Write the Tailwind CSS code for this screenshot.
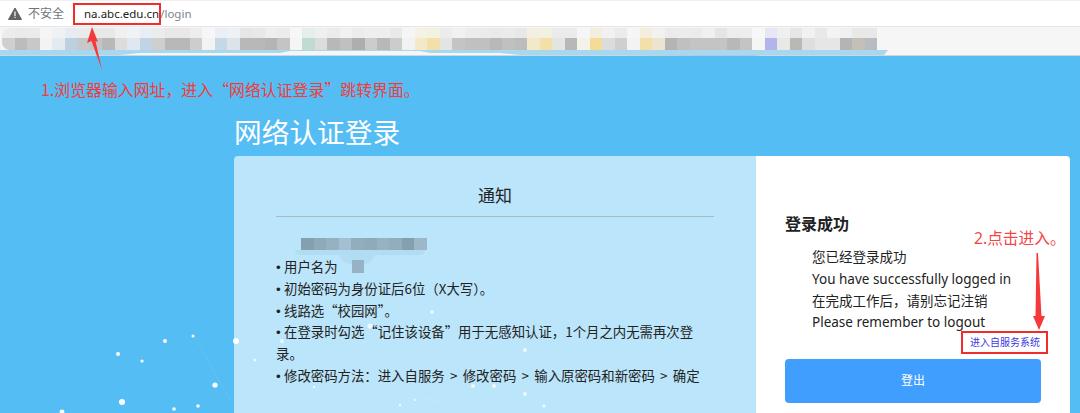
<!DOCTYPE html>
<html lang="zh-CN">
<head>
    <meta charset="UTF-8">
    <title>网络认证登录</title>
    <script src="https://cdn.jsdelivr.net/npm/@tailwindcss/browser@4"></script>
</head>
<body class="bg-[#54bdf3] font-['Noto_Sans','Noto_Sans_CJK_SC',sans-serif]">
<div class="relative w-[1080px] h-[413px] overflow-hidden">

    <!-- Address bar -->
    <div class="h-[27px] bg-white border-t border-b border-t-[#f0f0f0] border-b-[#e6e6e6] flex items-center pl-[8px] text-[12px] text-[#666]">
        <svg class="w-[14px] h-[13px] mr-[6px]" viewBox="0 0 14 13"><path d="M7 1 13.500 12.500H.5Z" fill="#5f6368" stroke="#5f6368" stroke-linejoin="round"/><path d="M6.400 4.500h1.200v4.400H6.400zM6.400 9.800h1.200v1.200H6.400z" fill="#fff"/></svg>
        <span class="w-[56px] text-[#70757a]">不安全</span>
        <span class="text-[11.500px] text-[#222]">na.abc.edu.cn</span><span class="text-[11.500px] text-[#80868b] ml-[1px]">/login</span>
    </div>

    <!-- Pixelated bookmarks bar -->
    <div class="h-[29px] bg-[#f6f6f6] flex flex-col">
        <div class="grid grid-cols-[repeat(70,12.5px)] grid-rows-[9.5px_12.5px] ml-[2px] mt-[1px] h-[22px]">
            <div class="bg-[#ececec] rounded-tl-[8px]"></div><div class="bg-[#eaeaea]"></div><div class="bg-[#ebebeb]"></div><div class="bg-[#f5f5f5]"></div><div class="bg-[#eef2f5]"></div><div class="bg-[#e6ecf2]"></div><div class="bg-[#ebebeb]"></div><div class="bg-[#e8e8e8]"></div><div class="bg-[#e8e8e8]"></div><div class="bg-[#f0f0f0]"></div><div class="bg-[#eff3f6]"></div><div class="bg-[#e8eef3]"></div><div class="bg-[#ececec]"></div><div class="bg-[#e8e8e8]"></div><div class="bg-[#e8e8e8]"></div><div class="bg-[#ededed]"></div><div class="bg-[#f6f6f6]"></div><div class="bg-[#e9eff4]"></div><div class="bg-[#eef1f3]"></div><div class="bg-[#e6e6e6]"></div><div class="bg-[#e8e8e8]"></div><div class="bg-[#eeeeee]"></div><div class="bg-[#ececec]"></div><div class="bg-[#f7f7f7]"></div><div class="bg-[#e4eeea]"></div><div class="bg-[#efefef]"></div><div class="bg-[#ebebeb]"></div><div class="bg-[#f1f1f1]"></div><div class="bg-[#ececec]"></div><div class="bg-[#eeeeee]"></div><div class="bg-[#eeeeee]"></div><div class="bg-[#e9e9e9]"></div><div class="bg-[#f5f5f5]"></div><div class="bg-[#f5f2e4]"></div><div class="bg-[#f4f1e2]"></div><div class="bg-[#ececec]"></div><div class="bg-[#f1f1f1]"></div><div class="bg-[#ebeded]"></div><div class="bg-[#ebebeb]"></div><div class="bg-[#e9e9e9]"></div><div class="bg-[#ebebeb]"></div><div class="bg-[#e8e8e8]"></div><div class="bg-[#f3f0e2]"></div><div class="bg-[#f3f0e2]"></div><div class="bg-[#ebebeb]"></div><div class="bg-[#ebebeb]"></div><div class="bg-[#f6f6f6]"></div><div class="bg-[#f2eddc]"></div><div class="bg-[#f1f1f1]"></div><div class="bg-[#ebebeb]"></div><div class="bg-[#f6f6f6]"></div><div class="bg-[#f2eddc]"></div><div class="bg-[#f1f1ed]"></div><div class="bg-[#ebebeb]"></div><div class="bg-[#ececec]"></div><div class="bg-[#ebebeb]"></div><div class="bg-[#f0f0f0]"></div><div class="bg-[#e5e5e5]"></div><div class="bg-[#ededed]"></div><div class="bg-[#ededed]"></div><div class="bg-[#f7f7f7]"></div><div class="bg-[#e6e6f6]"></div><div class="bg-[#efefef]"></div><div class="bg-[#e6e6e6]"></div><div class="bg-[#f1f1f1]"></div><div class="bg-[#e8e8e8]"></div><div class="bg-[#f3f3f3]"></div><div class="bg-[#f0f0f0]"></div><div class="bg-[#e8e8e6]"></div><div class="bg-[#e8e8e8]"></div>
            <div class="bg-[#cfcfcf] rounded-bl-[8px]"></div><div class="bg-[#bcbcbc]"></div><div class="bg-[#c8c8c8]"></div><div class="bg-[#f3f3f3]"></div><div class="bg-[#e4ebf0]"></div><div class="bg-[#bdd0e0]"></div><div class="bg-[#c8c8c8]"></div><div class="bg-[#c4c4c4]"></div><div class="bg-[#b8b8b8]"></div><div class="bg-[#dcdcdc]"></div><div class="bg-[#e0e8ef]"></div><div class="bg-[#c0d4e6]"></div><div class="bg-[#cfcfcf]"></div><div class="bg-[#b8b8b8]"></div><div class="bg-[#b8b8b8]"></div><div class="bg-[#cdcdcd]"></div><div class="bg-[#f3f3f3]"></div><div class="bg-[#c4d8e8]"></div><div class="bg-[#dce4ea]"></div><div class="bg-[#b8b8b8]"></div><div class="bg-[#b8b8b8]"></div><div class="bg-[#b4b4b4]"></div><div class="bg-[#c4c4c4]"></div><div class="bg-[#f5f5f5]"></div><div class="bg-[#c0dcd0]"></div><div class="bg-[#dcdcdc]"></div><div class="bg-[#b8b8b8]"></div><div class="bg-[#c0c0c0]"></div><div class="bg-[#aeaeae]"></div><div class="bg-[#cccccc]"></div><div class="bg-[#b8b8b8]"></div><div class="bg-[#cccccc]"></div><div class="bg-[#f2f2f2]"></div><div class="bg-[#f3e8c8]"></div><div class="bg-[#f3e0a8]"></div><div class="bg-[#e4e4e4]"></div><div class="bg-[#c4c4c4]"></div><div class="bg-[#c0c0c0]"></div><div class="bg-[#c0c0c0]"></div><div class="bg-[#b8b8b8]"></div><div class="bg-[#c0c0c0]"></div><div class="bg-[#bcbcbc]"></div><div class="bg-[#f3e8c8]"></div><div class="bg-[#f3e0a8]"></div><div class="bg-[#e4e4e0]"></div><div class="bg-[#b8b8b8]"></div><div class="bg-[#f5f2ec]"></div><div class="bg-[#f3dc98]"></div><div class="bg-[#dcdcdc]"></div><div class="bg-[#cfcfcf]"></div><div class="bg-[#f3f3f3]"></div><div class="bg-[#f3dfa8]"></div><div class="bg-[#ece4d0]"></div><div class="bg-[#b4b4b4]"></div><div class="bg-[#c0c0c0]"></div><div class="bg-[#c4c4c4]"></div><div class="bg-[#c4c4c4]"></div><div class="bg-[#c4c4c4]"></div><div class="bg-[#b8b8b8]"></div><div class="bg-[#c4c4c4]"></div><div class="bg-[#f5f5f5]"></div><div class="bg-[#b4b4ec]"></div><div class="bg-[#e8e8e4]"></div><div class="bg-[#b8b8b4]"></div><div class="bg-[#dcdee0]"></div><div class="bg-[#e6e6e6]"></div><div class="bg-[#e6e6e6]"></div><div class="bg-[#b4b4b4]"></div><div class="bg-[#c4c0b8]"></div><div class="bg-[#b8bcc0]"></div>
        </div>
        <svg class="w-full h-[6px] block" viewBox="0 0 1080 6"><path d="M0 0H888L884 5H760L755 6H700L620 5H520L500 3H430L420 1H290L280 3H140L120 5H0Z" fill="#a8d8f0"/><rect y="5" width="1080" height="1" fill="#b9c2c8" fill-opacity=".6"/></svg>
    </div>

    <!-- Page -->
    <div class="pl-[234px] pr-[10px]">
        <h1 class="h-[44px] mt-[54px] text-[27.700px] leading-[44px] font-normal text-white">网络认证登录</h1>
        <div class="mt-[2px] flex h-[300px] rounded-[4px] overflow-hidden">

            <!-- Notice -->
            <div class="w-[522px] bg-[#bbe5fa] px-[42px] text-[#222] font-['Noto_Sans_CJK_SC',sans-serif]">
                <h3 class="h-[60px] leading-[78px] text-center text-[17px] border-b border-[#a9b9c2] box-content pb-0">通知</h3>
                <div class="relative mt-[21px] ml-[25px] flex h-[12px] w-[126px] *:w-[12.6px]">
                    <div class="bg-[#84a0b0]"></div><div class="bg-[#8fa9b9]"></div><div class="bg-[#95b1c2]"></div><div class="bg-[#a3c0d2]"></div><div class="bg-[#91adbe]"></div><div class="bg-[#8eaabb]"></div><div class="bg-[#96b2c3]"></div><div class="bg-[#91adbe]"></div><div class="bg-[#84a0b0]"></div><div class="bg-[#9bb7c8]"></div>
                    <div class="absolute left-[-6px] top-[12px] h-[5px] !w-[130px] rounded-b-full bg-[#b2dcf2]"></div>
                    <div class="absolute left-[38px] top-[12px] h-[14px] !w-[36px] rounded-b-[12px] bg-[#b2dcf2]"></div>
                </div>
                <ul class="relative mt-[6px] text-[13.400px] leading-[21.800px] [word-spacing:2.300px]">
                    <li class="h-[21.800px]"><span class="inline-block w-[8px] leading-none font-['Liberation_Sans']">•</span>用户名为<span class="inline-block align-top mt-[4px] ml-[14px] h-[13px] w-[12px] bg-[#95b3c5]"></span></li>
                    <li><span class="inline-block w-[8px] leading-none font-['Liberation_Sans']">•</span>初始密码为身份证后6位（X大写）。</li>
                    <li><span class="inline-block w-[8px] leading-none font-['Liberation_Sans']">•</span>线路选“校园网”。</li>
                    <li><span class="inline-block w-[8px] leading-none font-['Liberation_Sans']">•</span>在登录时勾选“记住该设备”用于无感知认证，1个月之内无需再次登录。</li>
                    <li><span class="inline-block w-[8px] leading-none font-['Liberation_Sans']">•</span>修改密码方法：进入自服务 &gt; 修改密码 &gt; 输入原密码和新密码 &gt; 确定</li>
                </ul>
            </div>

            <!-- Success -->
            <div class="flex-1 bg-white pl-[29px] pr-[29px] text-[#222]">
                <h3 class="mt-[57px] text-[16px] leading-[22px] font-bold">登录成功</h3>
                <div class="mt-[12px] pl-[27px] text-[13.500px] leading-[21.800px]">
                    <p>您已经登录成功</p>
                    <p>You have successfully logged in</p>
                    <p>在完成工作后，请别忘记注销</p>
                    <p>Please remember to logout</p>
                </div>
                <div class="text-right text-[10px] leading-[14px] text-[#3a3ae0] mt-[1px] mr-[1px]">进入自服务系统</div>
                <button class="mt-[10px] block w-[256px] h-[44px] rounded-[4px] bg-[#409eff] text-[12px] text-white">登出</button>
            </div>
        </div>
    </div>

    <!-- Particles over the background -->
    <svg class="absolute left-0 top-[300px] pointer-events-none" width="760" height="113" viewBox="0 300 760 113">
        <g stroke="#fff" stroke-opacity=".07" stroke-width="1" fill="none">
            <path d="M268 410 310 398 360 392 430 400 470 412"/><path d="M290 411 350 396M420 395 450 410M120 340 190 410M194 336 230 400"/>
        </g>
        <g fill="#fff">
            <circle cx="236" cy="341" r="3"/><circle cx="215" cy="385" r="2.600"/><circle cx="193" cy="336" r="1.500"/><circle cx="165" cy="341" r="2"/><circle cx="118" cy="354" r="2"/><circle cx="142" cy="361" r="1.600"/><circle cx="122" cy="402" r="3"/><circle cx="174" cy="409" r="1.800"/><circle cx="198" cy="406" r="1.800"/><circle cx="62" cy="412" r="2.400"/>
            <g fill-opacity=".75"><circle cx="432" cy="312" r="1.800"/><circle cx="370" cy="326" r="2.600"/><circle cx="282" cy="341" r="2"/><circle cx="525" cy="350" r="2"/><circle cx="255" cy="360" r="1.500"/><circle cx="473" cy="386" r="2"/><circle cx="494" cy="386" r="2"/><circle cx="525" cy="394" r="2"/><circle cx="544" cy="406" r="1.600"/><circle cx="314" cy="387" r="1.200"/><circle cx="400" cy="405" r="1.200"/><circle cx="415" cy="400" r="1"/></g>
        </g>
    </svg>

    <!-- Annotations drawn over the screenshot -->
    <div class="absolute left-[73px] top-[3px] w-[88px] h-[22px] border-2 border-[#f02c2c]"></div>
    <svg class="absolute left-[80px] top-[24px]" width="30" height="50" viewBox="80 24 30 50"><path d="M92 27 98 42 95.500 41 102 70 91.500 41 87 43Z" fill="#f5393a"/></svg>
    <div class="absolute left-[41px] top-[79px] text-[15.900px] leading-[22px] text-[#f23c3c] font-['Noto_Sans_CJK_SC',sans-serif]">1.浏览器输入网址，进入“网络认证登录”跳转界面。</div>

    <div class="absolute left-[974px] top-[227px] text-[15.700px] leading-[22px] text-[#f64545]">2.点击进入。</div>
    <svg class="absolute left-[1030px] top-[250px]" width="18" height="82" viewBox="1030 250 18 82"><path d="M1036.500 253H1038L1041.500 316H1045L1039 330 1033 316H1035.500Z" fill="#f5393a"/></svg>
    <div class="absolute left-[961px] top-[331px] w-[87px] h-[23px] border-2 border-[#f02c2c]"></div>
</div>
</body>
</html>
